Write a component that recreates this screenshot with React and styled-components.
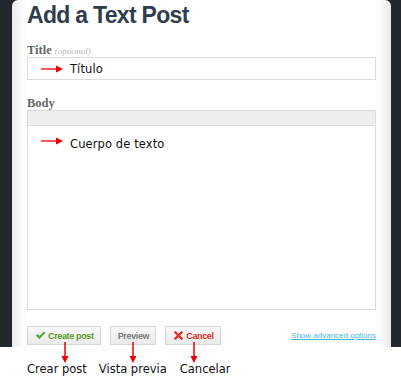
import React from 'react';
import styled, { createGlobalStyle } from 'styled-components';

const Global = createGlobalStyle`
  html, body {
    margin: 0;
    padding: 0;
    background: #fff;
  }
  body {
    font-family: "DejaVu Sans", Verdana, sans-serif;
  }
`;

// Zona capturada de la pantalla
const Pantalla = styled.div`
  width: 401px;
  height: 347px;
  box-sizing: border-box;
  background-color: #23272e;
  padding: 0 10px 0 12px;
  overflow: hidden;
`;

const Tarjeta = styled.div`
  height: 100%;
  box-sizing: border-box;
  border-radius: 6px 6px 0 0;
  padding: 3px 15px 0 15px;
  background: linear-gradient(to right, #e9e9e9 0, #fbfbfb 10px, #fff 16px, #fff calc(100% - 16px), #fbfbfb calc(100% - 10px), #e9e9e9 100%);
`;

const Titulo = styled.h1`
  margin: 0;
  font-family: "Liberation Sans", Arial, sans-serif;
  font-weight: bold;
  font-size: 23px;
  letter-spacing: -0.7px;
  line-height: 25px;
  color: #2f3d4d;
`;

const Etiqueta = styled.div`
  font-family: "Liberation Serif", Georgia, serif;
  font-size: 12.5px;
  font-weight: bold;
  color: #666;
  line-height: 13px;
  margin-top: ${(p) => p.$top}px;
  height: 13px;
`;

const Opcional = styled.span`
  font-style: italic;
  font-weight: normal;
  font-size: 9px;
  color: #b5b5b5;
  margin-left: 3px;
`;

const Campo = styled.div`
  height: 23px;
  box-sizing: border-box;
  border: 1px solid #dcdcdc;
  background: #fff;
  display: flex;
  align-items: center;
  gap: 7px;
  padding-left: 13px;
`;

const TextoEjemplo = styled.span`
  font-family: "DejaVu Sans", Verdana, sans-serif;
  font-size: 11.5px;
  color: #111;
  letter-spacing: 0.1px;
`;

const Editor = styled.div`
  height: 200px;
  box-sizing: border-box;
  border: 1px solid #dcdcdc;
  display: flex;
  flex-direction: column;
`;

const BarraEditor = styled.div`
  height: 14px;
  background: #eeeeec;
  border-bottom: 1px solid #dedede;
`;

const AreaTexto = styled.div`
  flex: 1;
  background: #fff;
  display: flex;
  align-items: flex-start;
  gap: 7px;
  padding: 11px 0 0 13px;
  line-height: 14px;
`;

const Acciones = styled.div`
  display: flex;
  align-items: center;
  margin-top: 16px;
  gap: 9px;
`;

const colores = {
  verde: '#5c9a2c',
  gris: '#7a7a7a',
  rojo: '#e0302a',
};

const Boton = styled.button`
  height: 19px;
  box-sizing: border-box;
  display: flex;
  align-items: center;
  gap: ${(p) => p.$gap}px;
  padding: 0 6px 0 ${(p) => p.$izq}px;
  border: 1px solid #d6d6d6;
  background: linear-gradient(#f8f8f8, #ebebeb);
  font-family: "Liberation Sans", Arial, sans-serif;
  font-weight: bold;
  font-size: 9px;
  letter-spacing: -0.35px;
  color: ${(p) => colores[p.$color]};
  cursor: pointer;
`;

const Enlace = styled.a`
  margin-left: auto;
  font-family: "Liberation Sans", Arial, sans-serif;
  font-size: 8px;
  color: #47b4e6;
  text-decoration: underline;
`;

// Zona de anotaciones debajo de la captura
const Notas = styled.div`
  position: relative;
  height: 37px;
  display: flex;
  align-items: flex-start;
  padding: 15px 0 0 27px;
  box-sizing: border-box;
`;

const Nota = styled.span`
  font-family: "DejaVu Sans", Verdana, sans-serif;
  font-size: 11.5px;
  color: #111;
  line-height: 14px;
  margin-left: ${(p) => p.$izq}px;
`;

const FlechaVertical = styled.svg`
  position: absolute;
  top: -5px;
  left: ${(p) => p.$x - 4}px;
`;

const FlechaDerecha = () => (
  <svg width="22" height="8" viewBox="0 0 22 8">
    <line x1="0" y1="4" x2="16" y2="4" stroke="#e00" strokeWidth="1.3" />
    <polygon points="15,0.5 22,4 15,7.5" fill="#e00" />
  </svg>
);

const Abajo = ({ x }) => (
  <FlechaVertical $x={x} width="8" height="21" viewBox="0 0 8 21">
    <line x1="4" y1="0" x2="4" y2="15" stroke="#e00" strokeWidth="1.5" />
    <polygon points="0.5,14 7.5,14 4,21" fill="#e00" />
  </FlechaVertical>
);

const IconoCheck = () => (
  <svg width="11" height="9" viewBox="0 0 11 9">
    <path d="M0.8 4.6 L2.6 3 L4.3 4.8 L9 0.6 L10.4 2 L4.3 8.2 Z" fill="#5caa3a" />
  </svg>
);

const IconoCruz = () => (
  <svg width="9" height="9" viewBox="0 0 9 9">
    <path d="M1.5 1.5 L7.5 7.5 M7.5 1.5 L1.5 7.5" stroke="#e8332a" strokeWidth="2.4" strokeLinecap="square" />
  </svg>
);

const App = () => (
  <>
    <Global />
    <Pantalla>
      <Tarjeta>
        <Titulo>Add a Text Post</Titulo>
        <Etiqueta $top={16}>
          Title<Opcional>(optional)</Opcional>
        </Etiqueta>
        <Campo>
          <FlechaDerecha />
          <TextoEjemplo>Título</TextoEjemplo>
        </Campo>
        <Etiqueta $top={17}>Body</Etiqueta>
        <Editor>
          <BarraEditor />
          <AreaTexto>
            <FlechaDerecha />
            <TextoEjemplo>Cuerpo de texto</TextoEjemplo>
          </AreaTexto>
        </Editor>
        <Acciones>
          <Boton $color="verde" $izq={7} $gap={2}>
            <IconoCheck />
            Create post
          </Boton>
          <Boton $color="gris" $izq={7} $gap={0}>
            Preview
          </Boton>
          <Boton $color="rojo" $izq={8} $gap={3}>
            <IconoCruz />
            Cancel
          </Boton>
          <Enlace href="#">Show advanced options</Enlace>
        </Acciones>
      </Tarjeta>
    </Pantalla>
    <Notas>
      <Abajo x={65} />
      <Abajo x={133} />
      <Abajo x={194} />
      <Nota $izq={0}>Crear post</Nota>
      <Nota $izq={12}>Vista previa</Nota>
      <Nota $izq={13}>Cancelar</Nota>
    </Notas>
  </>
);

export default App;
